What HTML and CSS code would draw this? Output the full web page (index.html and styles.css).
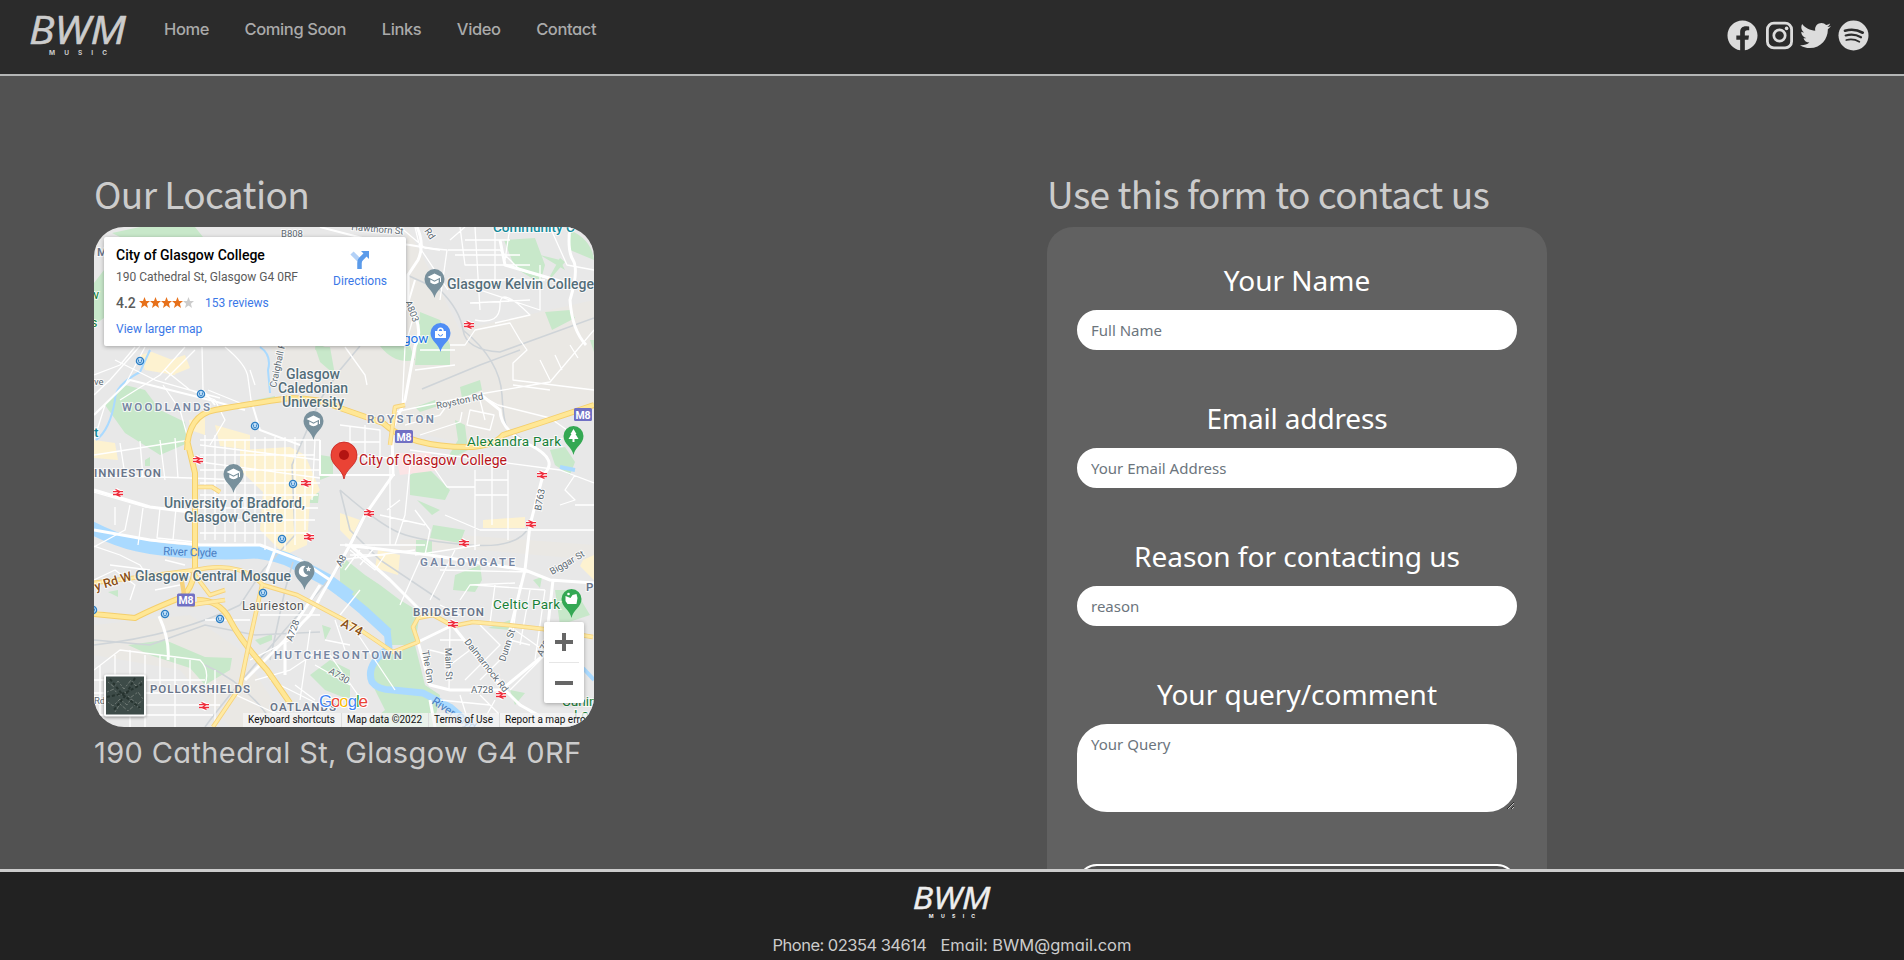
FILE: index.html
```html
<!DOCTYPE html>
<html lang="en">
<head>
<meta charset="utf-8">
<title>BWM Music - Contact</title>
<link rel="stylesheet" href="styles.css">
</head>
<body>
<header class="header">
  <svg class="logo" width="100" height="44" viewBox="0 0 100 44"><text class="logo-name" x="1" y="31.500" textLength="97" lengthAdjust="spacingAndGlyphs">BWM</text><text class="logo-sub" x="21" y="43" textLength="58">MUSIC</text></svg>
  <nav class="nav"><a>Home</a><a>Coming Soon</a><a>Links</a><a>Video</a><a>Contact</a></nav>
  <div class="social">
    <svg width="31" height="31" viewBox="0 0 512 512"><path d="M504 256C504 119 393 8 256 8S8 119 8 256c0 123.78 90.69 226.38 209.25 245V327.69h-63V256h63v-54.64c0-62.15 37-96.48 93.67-96.48 27.14 0 55.52 4.84 55.52 4.84v61h-31.28c-30.8 0-40.41 19.12-40.41 38.73V256h68.78l-11 71.69h-57.78V501C413.31 482.38 504 379.78 504 256z"/></svg>
    <svg width="27" height="31" viewBox="0 0 27 31"><rect x="1.400" y="3.100" width="24.200" height="24.800" rx="6.500" fill="none" stroke="#dcdcdc" stroke-width="2.800"/><circle cx="13.500" cy="15.500" r="5.700" fill="none" stroke="#dcdcdc" stroke-width="2.700"/><circle cx="20.600" cy="8.400" r="1.800"/></svg>
    <svg width="31" height="31" viewBox="0 0 512 512"><path d="M459.37 151.716c.325 4.548.325 9.097.325 13.645 0 138.72-105.583 298.558-298.558 298.558-59.452 0-114.68-17.219-161.137-47.106 8.447.974 16.568 1.299 25.34 1.299 49.055 0 94.213-16.568 130.274-44.832-46.132-.975-84.792-31.188-98.112-72.772 6.498.974 12.995 1.624 19.818 1.624 9.421 0 18.843-1.3 27.614-3.573-48.081-9.747-84.143-51.98-84.143-102.985v-1.299c13.969 7.797 30.214 12.67 47.431 13.319-28.264-18.843-46.781-51.005-46.781-87.391 0-19.492 5.197-37.36 14.294-52.954 51.655 63.675 129.3 105.258 216.365 109.807-1.624-7.797-2.599-15.918-2.599-24.04 0-57.828 46.782-104.934 104.934-104.934 30.213 0 57.502 12.67 76.67 33.137 23.715-4.548 46.456-13.32 66.599-25.34-7.798 24.366-24.366 44.833-46.132 57.827 21.117-2.273 41.584-8.122 60.426-16.243-14.292 20.791-32.161 39.308-52.628 54.253z"/></svg>
    <svg width="31" height="31" viewBox="0 0 31 31"><circle cx="15.500" cy="15.500" r="15"/><g fill="none" stroke="#2b2b2b" stroke-linecap="round"><path d="M7 10.700q9.500-2.600 17.700 2" stroke-width="2.700"/><path d="M7.700 15.500q8.300-2.300 15.300 1.800" stroke-width="2.200"/><path d="M8.300 20q7-1.800 13 1.700" stroke-width="1.800"/></g></svg>
  </div>
</header>
<main class="main">
  <section class="location">
    <h1 class="title title-loc">Our Location</h1>
    <div class="map">
      <svg class="map-art" width="500" height="500" viewBox="94 227 500 500">
        <defs>
          <g id="rail"><path d="M-5-1.500H5M-5 1.500H5M-2-4 2-1.500-2 1.500 2 4" fill="none" stroke="#fff" stroke-width="3"/><path d="M-5-1.300H5M-5 1.500H5M-2.500-3.500 2-1.300-2 1.500 2.500 3.500" fill="none" stroke="#ee2b3b" stroke-width="1.300"/></g>
          <g id="sub"><circle r="3.600" fill="#c9e4fa" stroke="#2e7fc4" stroke-width="1.300"/><path d="M-1.400-1.500V.5a1.400 1.400 0 0 0 2.800 0v-2" fill="none" stroke="#2e7fc4"/></g>
          <path id="pin" d="M0 19C-1.500 11-10 8-10 0A10 10 0 0 1 10 0C10 8 1.500 11 0 19z"/>
          <g id="grad"><use href="#pin" fill="#78909c"/><path d="M-7-2 0-5.500 7-2 0 1.500zM-4.200.5v3Q0 7 4.200 3.500v-3L0 2.800z" fill="#fff"/><path d="M6-1.500V3" stroke="#fff"/></g>
          <g id="shield"><rect x="-9" y="-6.500" width="18" height="13" rx="1.500" fill="#7070c4"/><text y="4" text-anchor="middle" font-size="10.500" font-weight="700" fill="#fff">M8</text></g>
        </defs>
        <rect x="94" y="227" width="500" height="500" fill="#e8e8e8"/>
        <path fill="#eae8e4" d="M407 227 440 290 460 330 594 300V405L520 425 470 445 405 430 340 405 290 390 270 346H407zM94 625 190 615 240 650 290 727H230L180 670 94 655zM400 540 460 535 594 545V560L480 550 400 550z"/>
        <g fill="#c8e8ca">
          <path d="M112 233 140 227H195L203 237H120zM94 283 104 270V318L94 325zM105 405 125 385 145 390 160 410 185 422 188 443 160 455 125 433zM504 240 535 238 545 265 540 283 515 268zM570 230Q592 240 594 260L570 250zM545 312 570 310 575 318 552 330zM420 312 440 320 450 345 450 365 415 365zM380 346H410L415 360Q395 365 380 346zM460 387 480 380 482 390 462 398zM415 407 435 400 438 406 420 412zM455 420 465 425 468 450 445 462 458 440zM550 450 565 447 575 462 570 475 555 465zM410 475 425 465 450 490 445 500 410 495zM433 525 465 530 460 543 430 538zM416 540 432 540V555H416zM455 575 480 565 482 580 475 592 453 590zM340 555 365 575 380 585 400 600 420 612 415 645 390 645 380 628 340 590zM375 660 415 645 425 685 440 695 435 720 450 727H365L385 710 370 680zM555 590 575 590 590 615 560 625zM320 455 333 457V475L320 480zM320 285 345 300 348 346H325L315 350zM315 347 330 347 335 375 320 362zM303 493H319L318 503H304zM128 645 165 640 205 657 232 658 230 670 205 685 190 668 150 655zM310 675 330 660 350 670V700L325 690zM322 625 331 628 325 640zM255 640 272 634V640L260 645zM510 690 525 693 515 705zM488 628 510 620 510 630zM533 580 542 577 540 588zM417 500 440 510 432 515z"/>
          <path d="M255 400 275 396V403H255zM108 592 118 590V597zM145 460 150 457V466H145zM545 285 560 258 565 262zM590 340H594V352zM540 255 560 260 565 270z"/>
        </g>
        <g fill="#fdf2d0">
          <path d="M152 352 180 363 175 375 145 370 140 355zM160 363 185 355 190 368 170 376zM240 450 290 447 305 455 320 490 310 500 307 545 285 555 260 530 263 492 240 470zM94 440 115 443 118 460 94 458zM378 550 400 555 398 575 375 568zM340 513 360 520 350 540 340 530zM483 520 525 517V528H483zM583 560 594 555V580L580 566zM189 420 205 418 205 435 190 430zM215 425 250 435 250 450 220 446z"/>
        </g>
        <path fill="#fbe4e5" d="M395 453H430L440 470 400 475z"/>
        <g fill="none" stroke="#aadaff" stroke-width="7" stroke-linejoin="round">
          <path stroke-width="13" d="M90 527Q115 540 137 545T193 552 257 552Q280 555 293 562T327 580L350 597"/>
          <path stroke-width="10" d="M340 591 363 610 388 633"/>
          <path d="M387 630 389 648Q365 665 372 682Q378 690 393 690L423 693 450 707 473 727"/>
          <path stroke-width="2" d="M150 350 140 372Q115 385 115 400Q110 430 96 440M260 347Q272 355 268 370L270 393"/>
          <path stroke-width="4" d="M560 467 575 470M583 668 594 680"/>
        </g>
        <g fill="none" stroke="#cfd4d8" stroke-width="1.600">
          <path d="M407 275 440 290Q460 310 463 330T500 352L594 318M422 389 480 365 520 350M463 330Q500 360 502 395T510 430L530 445M340 490Q380 525 400 533T470 545 530 525M94 640 150 645 205 625 255 635 320 632M205 665Q250 685 275 727M293 562 285 590 270 660M440 600 380 560 350 530 340 490M94 645Q180 635 240 605L263 570 295 535 292 465 320 400 340 370 360 346M205 727Q240 680 320 590L345 560"/>
        </g>
        <g fill="none" stroke="#fff" stroke-width="1.300" stroke-linejoin="round">
          <path d="M94 375 120 365 135 347M105 405 94 440M115 360 155 380 190 390 215 400M94 395 110 380 140 346M163 385 180 410 187 435M202 347 203 390M225 347Q247 365 248 378L251 400M208 390 250 407M215 400 225 420 210 445M250 370 255 385M120 400 160 375 185 347M145 347 125 385M165 380 195 350M165 370 190 390 220 398"/>
          <path d="M94 455 190 440 M94 475 190 478 240 480M120 443 125 475M140 441 143 478M160 440 165 480M175 438 178 478M94 492 145 507 190 510M94 547 125 530 130 505M115 507V525M143 508 138 545M160 508 157 538 195 542M176 508 173 540M94 546 120 555 140 565 150 580"/>
          <path d="M200 440H320M200 455H315M200 470H320M200 483H320M200 495H318M198 508H318M198 520H315M200 533H310M205 435V540M215 435V540M225 440V542M235 440V542M245 440V542M255 437V545M265 437V550M275 437V550M285 437V550M295 437V545M305 440V530M315 440 312 500M200 445 320 460M200 462 320 478"/>
          <path d="M400 227 425 248 447 250 440 300M415 227 420 248 448 290M450 240 465 227M448 250H500L520 270 570 285M460 227 465 265H530M475 227 480 310M495 227V290M510 227 505 260M465 240H510M455 255H520M465 280H545M480 290 540 310V265M470 303 530 300M475 320Q500 325 500 305T530 315L495 323M550 227 567 265 594 270"/>
          <path d="M415 312 405 346 402 410M450 345H465L475 330 510 323 520 340 527 350 513 363V380L594 390M540 360 550 380M555 355 562 370M570 345 578 358M513 385 550 390M345 347 365 375 367 385M415 370 455 365M420 350 455 350M395 412 480 394 550 382 594 330M405 425 440 415 445 408M420 435 460 422 462 412M480 395 498 405 550 418 567 430M470 410 494 415 490 430 467 425zM480 400 485 420M340 425 380 430 380 460M350 427V460M340 442H380M365 425V460"/>
          <path d="M390 455V545M340 455 390 458M410 465 405 515 395 545M425 455 447 487H475M410 450 560 470 594 483M475 470 475 550M475 480H508M475 495H508M492 465V525M508 470V540M445 515 480 530H594M560 505 575 500 565 490 575 475M575 505H594M415 510 430 530 425 555M380 515 425 525M387 510 400 500M340 545 425 545M340 560 415 550M415 555 480 545M345 570 360 550M375 547 360 565"/>
          <path d="M350 555 385 555 375 570 350 550M420 560 400 605M455 550 430 600M440 570 530 572M475 585 545 590M460 600 470 585 515 583M495 585 490 623M440 605 460 615M520 585 510 650 480 680M530 590 520 645M545 590 535 660M510 640 530 645M515 630 550 655M480 625 500 645 465 680M450 625 449 690M463 640 440 640M470 650 450 665M418 640 430 685M430 650 450 655M460 695 470 727M480 695 500 715M495 700 480 727M510 690 560 640M515 700 550 727M440 700 490 705"/>
          <path d="M94 670 120 650 200 660Q210 670 205 685M100 665V727M115 655V710M130 650V727M145 655V727M160 655V690M175 658V727M190 660V690M94 680H205M94 693H195M120 705H220M94 715H213M215 670V727M250 660 290 640 320 600M255 680 290 670 320 650M295 685 315 700M310 630 300 700M325 640 350 645M335 620 345 650M315 665 350 685M330 655 365 705M270 680 330 710M225 690 290 720M94 580 115 570 135 585 130 600M110 565 150 570M165 560 185 565M160 575H190M155 590 180 585M205 620H250M260 615 320 615M355 630 395 690M340 615 360 590"/>
        </g>
        <g fill="none" stroke="#fff" stroke-width="3" stroke-linejoin="round">
          <path d="M417 227Q425 245 418 260L408 275V300Q425 330 415 346L405 400 392 430 393 475 365 515 350 545M350 545 390 580 420 610M453 626 500 685 520 705 560 727M480 394 500 410Q500 430 530 445T543 475L530 525 525 570 510 630M570 227Q567 250 573 260T570 300Q572 330 586 345M573 285 505 265 500 240M525 570 550 580 594 583M553 580 548 625M418 642 453 625M418 642 430 685 450 690 501 690 550 650M94 490 150 507 190 512M94 530 150 540 200 545 260 545 300 560 330 580 310 615 245 680M330 580 350 545M159 616Q170 640 168 660M345 545 430 555 525 570M94 612 130 618M275 550 260 590M320 585 285 640V675M430 700 435 727"/>
          <path stroke-width="2" d="M94 415 130 380 210 400 245 410M203 390 215 405M251 400 260 430 300 445M320 227 370 240 410 245 440 250M395 475H320V440M406 310 415 280"/>
        </g>
        <g fill="none" stroke-linejoin="round">
          <path stroke="#f4cf6d" stroke-width="6" d="M187 450Q188 415 215 410T290 398Q320 398 340 408L383 423Q410 448 473 447 495 445 503 435L540 423 594 405M187 440 195 473V567Q193 590 180 598 150 610 135 618L93 614M197 600Q220 600 230 620T267 670L290 703"/>
          <path stroke="#ffe795" stroke-width="4" d="M187 450Q188 415 215 410T290 398Q320 398 340 408L383 423Q410 448 473 447 495 445 503 435L540 423 594 405M187 440 195 473V567Q193 590 180 598 150 610 135 618L93 614M197 600Q220 600 230 620T267 670L290 703"/>
          <path stroke="#f6d27b" stroke-width="4.500" d="M93 583 195 570Q240 560 263 585L297 595 350 623 393 652 418 642 413 627 418 618 433 615 453 626 473 622 507 625 543 629 593 637M262 585 247 653 240 687 213 727M198 487H212L220 492M195 575 210 595 225 590M190 605 225 600M390 445 395 407 405 405M180 570 185 600"/>
          <path stroke="#ffeaa3" stroke-width="2.800" d="M93 583 195 570Q240 560 263 585L297 595 350 623 393 652 418 642 413 627 418 618 433 615 453 626 473 622 507 625 543 629 593 637M262 585 247 653 240 687 213 727M198 487H212L220 492M195 575 210 595 225 590M190 605 225 600M390 445 395 407 405 405"/>
        </g>
        <use href="#rail" x="198" y="460"/><use href="#rail" x="118" y="493"/><use href="#rail" x="306" y="483"/><use href="#rail" x="309" y="537"/><use href="#rail" x="204" y="706"/><use href="#rail" x="542" y="475"/><use href="#rail" x="531" y="524"/><use href="#rail" x="464" y="543"/><use href="#rail" x="369" y="513"/><use href="#rail" x="453" y="624"/><use href="#rail" x="501" y="695"/><use href="#rail" x="469" y="325"/>
        <use href="#sub" x="140" y="361"/><use href="#sub" x="201" y="394"/><use href="#sub" x="255" y="426"/><use href="#sub" x="293" y="484"/><use href="#sub" x="282" y="539"/><use href="#sub" x="263" y="593"/><use href="#sub" x="165" y="614"/><use href="#sub" x="220" y="619"/><use href="#sub" x="93" y="610"/>
        <use href="#shield" x="404" y="436.500"/><use href="#shield" x="583" y="414.500"/><use href="#shield" x="186" y="600"/>
        <use href="#grad" x="313.500" y="421"/><use href="#grad" x="434.500" y="279"/><use href="#grad" x="233.500" y="474"/>
        <g transform="translate(440.500 333)"><use href="#pin" fill="#4f8df5"/><path d="M-5.500-2H5.500V5H-5.500z" fill="#fff"/><path d="M-2.500-2A2.500 2.800 0 0 1 2.500-2" fill="none" stroke="#fff" stroke-width="1.500"/><path d="M-2 1a2 2 0 0 0 4 0" fill="none" stroke="#4f8df5"/></g>
        <g transform="translate(573.500 436)"><use href="#pin" fill="#34a853"/><path d="M0-7 3-2H2L5 3H1V6H-1V3H-5L-2-2H-3z" fill="#fff"/></g>
        <g transform="translate(571.500 599)"><use href="#pin" fill="#34a853"/><path d="M-6-3-1-1 1-4 5-5 6-1 5 5H-4L-6 2z" fill="#fff"/><circle cx="-3" cy="-5" r="1.300" fill="#fff"/></g>
        <g transform="translate(304.500 571)"><use href="#pin" fill="#78909c"/><path d="M1-5A5.500 5.500 0 1 0 4 4 5 5 0 0 1 1-5z" fill="#fff"/><path d="m4-5 .8 2 2 .2-1.500 1.300.4 2L4-.6 2.300.5l.4-2L1.200-2.800l2-.2z" fill="#fff"/></g>
        <path d="M344 479C342 468 331 466 331 455A13 13 0 0 1 357 455C357 466 346 468 344 479z" fill="#ea4335" stroke="#c5221f" stroke-width=".8"/><circle cx="344" cy="455" r="5" fill="#b31412"/>
        <g class="lbl">
          <g fill="#546e7a" font-size="14">
            <text x="286" y="379" textLength="54">Glasgow</text><text x="278" y="393" textLength="70">Caledonian</text><text x="282" y="407" textLength="62">University</text>
            <text x="447" y="289" textLength="147">Glasgow Kelvin College</text>
            <text x="164" y="508" textLength="141">University of Bradford,</text><text x="184" y="522" textLength="99">Glasgow Centre</text>
            <text x="135" y="581" textLength="156">Glasgow Central Mosque</text>
          </g>
          <text x="242" y="610" font-size="12.500" fill="#555" font-weight="400" textLength="62">Laurieston</text>
          <text x="359" y="465" font-size="14" fill="#b8141a" font-weight="400" textLength="148">City of Glasgow College</text>
          <g fill="#188038" font-size="13.500" font-weight="400"><text x="467" y="446" textLength="94">Alexandra Park</text><text x="493" y="609" textLength="67">Celtic Park</text><text x="562" y="706">Cuningar</text><text x="574" y="719">Loop</text><text x="94" y="299" text-anchor="middle">w</text><text x="94" y="327" text-anchor="middle">s</text></g>
          <text x="493" y="232" font-size="13.500" fill="#11899a">Community C</text><text x="94" y="437" font-size="13.500" fill="#11899a">t</text>
          <text x="403" y="343" font-size="13.500" font-weight="400" fill="#1a73e8">gow</text>
          <g fill="#7686a2" font-size="11.500" font-weight="600">
            <text x="122" y="411" textLength="88">WOODLANDS</text><text x="367" y="423" textLength="67">ROYSTON</text><text x="420" y="566" textLength="95">GALLOWGATE</text><text x="274" y="659" textLength="128">HUTCHESONTOWN</text>
          </g>
          <g fill="#69758a" font-size="11.500" font-weight="600">
            <text x="94" y="477" textLength="67">INNIESTON</text><text x="413" y="616" textLength="71">BRIDGETON</text><text x="150" y="693" textLength="100">POLLOKSHIELDS</text><text x="270" y="711" textLength="66">OATLANDS</text><text x="586" y="591">P</text><text x="97" y="256">M</text>
          </g>
          <g class="river" fill="#4a7fc4" font-size="11.500"><text x="163" y="555" transform="rotate(2 163 555)" textLength="54">River Clyde</text><text x="431" y="703" transform="rotate(34 431 703)">River Clyde</text></g>
          <g fill="#8a5018" font-size="12.500"><text x="96" y="591" transform="rotate(-17 96 591)">y Rd W</text><text x="340" y="626" transform="rotate(27 340 626)">A74</text></g>
          <g fill="#5d6a73" font-size="9.500" font-weight="400">
            <text x="437" y="409" transform="rotate(-12 437 409)">Royston Rd</text><text x="351" y="230" transform="rotate(5 351 230)">Hawthorn St</text><text x="424" y="231" transform="rotate(55 424 231)">Rd</text><text x="281" y="237">B808</text><text x="405" y="302" transform="rotate(68 405 302)">A803</text><text x="276" y="388" transform="rotate(-78 276 388)">Craighall Rd</text><text x="541" y="511" transform="rotate(-80 541 511)">B763</text><text x="552" y="575" transform="rotate(-30 552 575)">Biggar St</text><text x="341" y="567" transform="rotate(-60 341 567)">A8</text><text x="292" y="642" transform="rotate(-70 292 642)">A728</text><text x="328" y="673" transform="rotate(30 328 673)">A730</text><text x="422" y="651" transform="rotate(80 422 651)">The Grn</text><text x="445" y="648" transform="rotate(88 445 648)">Main St</text><text x="464" y="642" transform="rotate(52 464 642)">Dalmarnock Rd</text><text x="505" y="662" transform="rotate(-72 505 662)">Dunn St</text><text x="471" y="693">A728</text><text x="542" y="657" transform="rotate(-60 542 657)">A728</text><text x="94" y="385">ve</text><text x="94" y="704">Rd</text>
          </g>
        </g>
        <text class="google" x="319" y="707" textLength="49"><tspan fill="#4285f4">G</tspan><tspan fill="#ea4335">o</tspan><tspan fill="#fbbc05">o</tspan><tspan fill="#4285f4">g</tspan><tspan fill="#34a853">l</tspan><tspan fill="#ea4335">e</tspan></text>
        <path fill="#f5f5f5" opacity=".75" d="M243 713H594V727H243z"/><path d="M341.500 713V727M428.500 713V727M499.500 713V727" stroke="#ddd"/>
        <g font-size="10" fill="#111"><text x="248" y="723" textLength="87">Keyboard shortcuts</text><text x="347" y="723" textLength="75">Map data ©2022</text><text x="434" y="723" textLength="59">Terms of Use</text><text x="505" y="723" textLength="84">Report a map error</text></g>
        <g class="sat"><rect x="104" y="674.500" width="42" height="42" rx="2" fill="#fff"/><rect x="106" y="676.500" width="38" height="38" fill="#3d4b48"/><path d="M108 682l6 5 4-6 6 8 7-9 5 6 6-5M107 692l7-3 5 7 6-4 5 6 8-6 5 7M108 702l5 4 7-7 7 6 4-6 7 5 5-4M115 712l5-8 8 7 7-6 7 5" fill="none" stroke="#717b76" stroke-dasharray="2 1.500 4 2"/><path d="M110 679l12 15 18 14M135 678l-10 18-12 15M107 697l18-4 17-9" fill="none" stroke="#26332f" stroke-width="2" stroke-dasharray="3 2"/></g>
      </svg>
      <div class="info">
        <div class="info-text">
          <div class="place">City of Glasgow College</div>
          <div class="addr">190 Cathedral St, Glasgow G4 0RF</div>
          <div class="rating"><b>4.2</b><svg width="55" height="12" viewBox="0 0 55 12"><defs><path id="star" d="m5.500 0 1.500 3.900 4 .2-3.100 2.600 1.100 4.200-3.500-2.400L2 10.900l1.100-4.200L0 4.100l4-.2z"/></defs><g fill="#e7711b"><use href="#star"/><use href="#star" x="11"/><use href="#star" x="22"/><use href="#star" x="33"/></g><use href="#star" x="44" fill="#ccc"/></svg><a>153 reviews</a></div>
          <a class="larger">View larger map</a>
        </div>
        <div class="directions"><svg width="20" height="20" viewBox="0 0 20 20"><path d="M2 3 9 10" stroke="#b3d1f7" stroke-width="4.500"/><path d="M9.500 19V13Q9.500 10 12 8L16 4" fill="none" stroke="#5b9bea" stroke-width="4.500"/><path d="M11 1H19V9z" fill="#5b9bea"/></svg><a>Directions</a></div>
      </div>
      <div class="zoom"><span class="plus"></span><span class="line"></span><span class="minus"></span></div>
    </div>
    <p class="address">190 Cathedral St, Glasgow G4 0RF</p>
  </section>
  <section class="contact">
    <h1 class="title title-form">Use this form to contact us</h1>
    <form class="form">
      <label class="label l-name">Your Name</label><input class="field" placeholder="Full Name">
      <label class="label l-mail">Email address</label><input class="field" placeholder="Your Email Address">
      <label class="label l-reason">Reason for contacting us</label><input class="field" placeholder="reason">
      <label class="label l-query">Your query/comment</label><textarea class="field area" placeholder="Your Query"></textarea>
      <button class="send" type="button">Submit</button>
    </form>
  </section>
</main>
<footer class="footer">
  <svg class="logo" width="80" height="36" viewBox="0 0 100 44"><text class="logo-name" x="1" y="31.500" textLength="97" lengthAdjust="spacingAndGlyphs">BWM</text><text class="logo-sub" x="21" y="43" textLength="58">MUSIC</text></svg>
  <div class="foot-line"><span class="phone">Phone: 02354 34614</span><span class="mail">Email: BWM@gmail.com</span></div>
</footer>
</body>
</html>
```
FILE: styles.css
```css
* { box-sizing: border-box; }
body { margin: 0; height: 960px; display: flex; flex-direction: column; overflow: hidden; background: #525252; font-family: "Noto Sans", sans-serif; }
.header { height: 76px; flex: none; display: flex; align-items: flex-start; background: #2b2b2b; border-bottom: 2px solid #b4b6b6; padding: 12px 35px 0 28px; }
.logo { flex: none; overflow: visible; }
.header .logo { fill: #ccc; stroke: #ccc; }
.logo-name { font: italic 400 38px "Open Sans", sans-serif; stroke-width: .6; stroke-linejoin: round; }
.logo-sub { font: 700 6.5px Inter, sans-serif; stroke: none; }
.nav { display: flex; gap: 35.6px; margin: 5px 0 0 36px; font: 500 16.5px/24px Inter, sans-serif; font-feature-settings: "cv11"; letter-spacing: -0.4px; color: #aaa; }
.social { margin-left: auto; display: flex; gap: 7.2px; padding-top: 8px; fill: #dcdcdc; }
.main { flex: 1; min-height: 0; overflow: hidden; display: flex; padding: 91px 0 0 94px; }
.location { width: 953px; flex: none; }
.title { margin: 0; height: 60px; font: 400 37px/52px "Noto Sans CJK JP", sans-serif; letter-spacing: -.6px; color: #ccc; white-space: nowrap; }
.title-form { letter-spacing: -.65px; word-spacing: .5px; }
.map { position: relative; width: 500px; height: 500px; border-radius: 30px; overflow: hidden; font-family: Roboto, sans-serif; }
.map-art { display: block; }
.lbl { font-weight: 500; }
.lbl text { paint-order: stroke; stroke: #fff; stroke-width: 2px; stroke-opacity: .75; }
.lbl .river text { stroke: none; font-weight: 400; }
.google { font: 500 17px "Liberation Sans", sans-serif; paint-order: stroke; stroke: #fff; stroke-width: 2px; }
.sat { filter: drop-shadow(0 1px 1.5px rgba(0,0,0,.4)); }
.info { position: absolute; left: 10px; top: 10px; width: 302px; height: 109px; background: #fff; border-radius: 2px; box-shadow: 0 1px 4px rgba(0,0,0,.3); display: flex; justify-content: space-between; padding: 9px 19px 0 12px; font-size: 12px; color: #5b5b5b; }
.info a { color: #3b78e7; }
.place { font-size: 14px; font-weight: 500; line-height: 18px; color: #000; }
.addr { line-height: 16px; margin-top: 5px; white-space: nowrap; }
.rating { display: flex; align-items: center; margin-top: 9px; height: 18px; }
.rating b { font-size: 14px; font-weight: 500; width: 23px; }
.rating a { margin-left: 11px; }
.larger { display: block; margin-top: 9px; line-height: 16px; }
.directions { display: flex; flex-direction: column; align-items: center; padding-top: 4px; line-height: 22px; }
.zoom { position: absolute; right: 10px; top: 395px; width: 40px; height: 81px; background: #fff; border-radius: 2px; box-shadow: 0 1px 4px rgba(0,0,0,.3); display: grid; grid-template-rows: 40px 1px 40px; place-items: center; }
.plus { width: 18px; height: 18px; background: linear-gradient(#666, #666) center / 18px 4px no-repeat, linear-gradient(#666, #666) center / 4px 18px no-repeat; }
.minus { width: 18px; height: 4px; background: #666; }
.line { width: 30px; height: 1px; background: #e6e6e6; }
.address { margin: 7px 0 0; font: 400 29px/38px Inter, sans-serif; font-feature-settings: "cv11"; letter-spacing: .38px; color: #ccc; white-space: nowrap; }
.form { width: 500px; height: 760px; border-radius: 26px; background: #616161; padding: 33px 30px 0; display: flex; flex-direction: column; }
.label { text-align: center; font: 400 28px/40px "Noto Sans", sans-serif; color: #fff; height: 50px; flex: none; white-space: nowrap; }
.field { width: 440px; height: 40px; flex: none; border: 2px solid #fff; border-radius: 20px; background: #fff; padding: 6px 12px; font: 400 15px/24px "Noto Sans", sans-serif; margin: 0 0 48px; outline: none; }
.field::placeholder { color: #6c757d; opacity: 1; }
.area { height: 88px; border-radius: 30px; margin-bottom: 52px; }
.send { height: 44px; border: 2px solid #fff; border-radius: 20px; background: #525252; color: #fff; font: 16px "Noto Sans", sans-serif; flex: none; }
.l-mail { letter-spacing: -.15px; }
.footer { height: 91px; flex: none; background: #222; border-top: 3px solid #ccc; display: flex; flex-direction: column; align-items: center; padding-top: 11px; color: #ccc; }
.footer .logo { fill: #eee; stroke: #eee; }
.foot-line { display: flex; gap: 14px; margin-top: 14px; font: 400 16.5px/24px Inter, sans-serif; font-feature-settings: "cv11"; white-space: nowrap; }
.phone { letter-spacing: -.53px; }
```
